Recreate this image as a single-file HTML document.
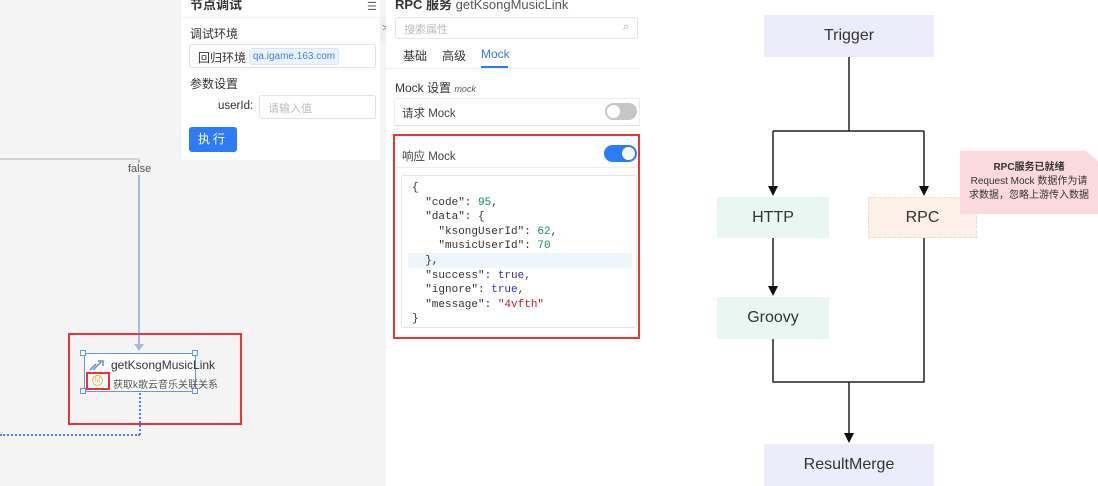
<!DOCTYPE html>
<html><head><meta charset="utf-8"><style>
*{box-sizing:border-box;margin:0;padding:0}
body{width:1098px;height:486px;position:relative;overflow:hidden;background:#fff;font-family:"Liberation Sans","Noto Sans CJK SC",sans-serif;color:#333}
.a{position:absolute}
.mono{font-family:"Liberation Mono",monospace;font-size:11px;line-height:14.6px;white-space:pre;color:#333}
.box{position:absolute;display:flex;align-items:center;justify-content:center;font-size:16px;color:#333}
</style></head><body>
<div class="a" style="left:0;top:0;width:386px;height:486px;background:#f4f4f5"></div>
<div class="a" style="left:230px;top:0;width:150px;height:6px;background:#fbe9e9;opacity:.6"></div>
<div class="a" style="left:0;top:158px;width:140px;height:2px;border-top:2px solid #d0d3d8;border-right:2px solid #d0d3d8;border-top-right-radius:4px"></div>
<div class="a" style="left:138px;top:160px;width:2px;height:190px;background:#a9bbd4"></div>
<div class="a" style="left:134px;top:344px;width:0;height:0;border-left:5px solid transparent;border-right:5px solid transparent;border-top:7px solid #a9bbd4"></div>
<div class="a" style="left:128px;top:163px;font-size:11px;color:#555;background:#f4f4f5">false</div>
<div class="a" style="left:180px;top:0;width:200px;height:160px;background:#fff;border-left:1px solid #eee"></div>
<div class="a" style="left:190px;top:-6px;font-size:13px;font-weight:bold;color:#333">节点调试</div>
<div class="a" style="left:367px;top:0;font-size:11px;color:#666">☰</div>
<div class="a" style="left:180px;top:17px;width:200px;height:1px;background:#f2f2f2"></div>
<div class="a" style="left:190px;top:25px;font-size:12px">调试环境</div>
<div class="a" style="left:189px;top:44px;width:187px;height:24px;border:1px solid #e2e2e2;border-radius:3px"></div>
<div class="a" style="left:198px;top:49px;font-size:12px">回归环境</div>
<div class="a" style="left:249px;top:48px;width:90px;height:17px;background:#edf3fe;border:1px solid #d6e4fb;border-radius:3px;font-size:10px;color:#3b7ff0;text-align:center;line-height:15px">qa.igame.163.com</div>
<div class="a" style="left:190px;top:75px;font-size:12px">参数设置</div>
<div class="a" style="left:218px;top:100px;font-size:11.5px">userId:</div>
<div class="a" style="left:259px;top:95px;width:117px;height:24px;border:1px solid #e2e2e2;border-radius:3px;font-size:11px;color:#bbb;padding:4px 8px">请输入值</div>
<div class="a" style="left:189px;top:127px;width:48px;height:25px;background:#2e7bf6;border-radius:3px;color:#fff;font-size:12px;text-align:center;line-height:25px;letter-spacing:3px">执行</div>
<div class="a" style="left:68px;top:333px;width:174px;height:92px;border:2px solid #e33"></div>
<div class="a" style="left:84px;top:353px;width:112px;height:39px;background:#fff;border:1.5px solid #6b93e6;border-radius:4px"></div>
<div class="a" style="left:80px;top:350px;width:6px;height:6px;background:#fff;border:1px solid #6b93e6"></div>
<div class="a" style="left:192px;top:350px;width:6px;height:6px;background:#fff;border:1px solid #6b93e6"></div>
<div class="a" style="left:80px;top:388px;width:6px;height:6px;background:#fff;border:1px solid #6b93e6"></div>
<div class="a" style="left:192px;top:388px;width:6px;height:6px;background:#fff;border:1px solid #6b93e6"></div>
<svg class="a" style="left:89px;top:358px" width="16" height="13"><path d="M1 12 L7 6 M4 12 L12 4 M9 3 H14 V8" stroke="#5b88e0" stroke-width="1.5" fill="none"/></svg>
<div class="a" style="left:111px;top:358px;font-size:12px;color:#333">getKsongMusicLink</div>
<div class="a" style="left:86px;top:372px;width:24px;height:18px;border:2px solid #e33"></div>
<div class="a" style="left:92px;top:375px;width:11px;height:11px;border:1px solid #e8b547;border-radius:50%;font-size:7px;color:#e8b547;text-align:center;line-height:10px">M</div>
<div class="a" style="left:113px;top:376px;font-size:10px;color:#555">获取k歌云音乐关联关系</div>
<div class="a" style="left:139px;top:393px;width:0;height:42px;border-left:2px dotted #4f7fde"></div>
<div class="a" style="left:0;top:434px;width:140px;height:0;border-top:2px dotted #4f7fde"></div>
<div class="a" style="left:380px;top:16px;width:10px;height:26px;background:#eee;border-radius:4px 0 0 4px;font-size:10px;color:#777;line-height:26px;text-align:center">&gt;</div>
<div class="a" style="left:386px;top:0;width:254px;height:486px;background:#fff"></div>
<div class="a" style="left:395px;top:-6px;font-size:13px;font-weight:bold">RPC 服务 <span style="font-weight:normal;color:#555">getKsongMusicLink</span></div>
<div class="a" style="left:395px;top:17px;width:243px;height:22px;border:1px solid #e5e5e5;border-radius:3px;font-size:11px;color:#bbb;padding:3px 8px">搜索属性<span style="float:right;color:#aaa">⌕</span></div>
<div class="a" style="left:403px;top:47px;font-size:12px">基础</div>
<div class="a" style="left:442px;top:47px;font-size:12px">高级</div>
<div class="a" style="left:481px;top:47px;font-size:12px;color:#2e7bf6">Mock</div>
<div class="a" style="left:481px;top:66px;width:27px;height:2px;background:#2e7bf6"></div>
<div class="a" style="left:386px;top:68px;width:254px;height:1px;background:#eee"></div>
<div class="a" style="left:395px;top:79px;font-size:12px">Mock 设置 <i style="font-size:9px;color:#555">mock</i></div>
<div class="a" style="left:394px;top:98px;width:246px;height:28px;border:1px solid #eee;border-bottom-color:#ddd"></div>
<div class="a" style="left:402px;top:105px;font-size:11.5px;color:#444">请求 Mock</div>
<div class="a" style="left:605px;top:103px;width:32px;height:17px;background:#c6c6c6;border-radius:9px"></div>
<div class="a" style="left:607px;top:105px;width:13px;height:13px;background:#fff;border-radius:50%"></div>
<div class="a" style="left:393px;top:134px;width:247px;height:205px;border:2px solid #e33"></div>
<div class="a" style="left:402px;top:148px;font-size:11.5px;color:#444">响应 Mock</div>
<div class="a" style="left:604px;top:145px;width:33px;height:17px;background:#2e7bf6;border-radius:9px"></div>
<div class="a" style="left:622px;top:147px;width:13px;height:13px;background:#fff;border-radius:50%"></div>
<div class="a" style="left:396px;top:167px;width:242px;height:1px;background:#eee"></div>
<div class="a" style="left:401px;top:175px;width:236px;height:153px;border:1px solid #e5e5e5;border-radius:3px"></div>
<div class="a" style="left:408px;top:253px;width:224px;height:15px;background:#eef6fc"></div>
<div class="a mono" style="left:412px;top:181px">{
  "code": <span style="color:#178a5e">95</span>,
  "data": {
    "ksongUserId": <span style="color:#178a5e">62</span>,
    "musicUserId": <span style="color:#178a5e">70</span>
  },
  "success": <span style="color:#3a2fa3">true</span>,
  "ignore": <span style="color:#3a2fa3">true</span>,
  "message": <span style="color:#c41d1d">"4vfth"</span>
}</div>
<svg class="a" style="left:640px;top:0" width="458" height="486">
<g stroke="#222" stroke-width="1.5" fill="none">
<path d="M209 57 V131 M133 131 H284 M133 131 V188 M284 131 V188 M133 238 V288 M133 339 V382 H284 V238 M209 382 V436"/>
</g>
<g fill="#111">
<path d="M128 186 H138 L133 196 Z"/><path d="M279 186 H289 L284 196 Z"/><path d="M128 286 H138 L133 296 Z"/><path d="M204 433 H214 L209 443 Z"/>
</g>
</svg>
<div class="box" style="left:764px;top:15px;width:170px;height:42px;background:#ececfb">Trigger</div>
<div class="box" style="left:717px;top:197px;width:112px;height:41px;background:#e9f6f2">HTTP</div>
<div class="box" style="left:868px;top:197px;width:109px;height:41px;background:#fdf0e8;border:1px dashed #f4dccc">RPC</div>
<div class="box" style="left:717px;top:297px;width:112px;height:42px;background:#e9f6f2">Groovy</div>
<div class="box" style="left:764px;top:444px;width:170px;height:42px;background:#ececfb">ResultMerge</div>
<div class="a" style="left:960px;top:151px;width:138px;height:63px;background:#fbd9dc;font-size:10px;line-height:14px;text-align:center;padding-top:10px;color:#333;clip-path:polygon(0 0,126px 0,138px 10px,138px 100%,0 100%)">
<b>RPC服务已就绪</b><br>Request Mock 数据作为请<br>求数据，忽略上游传入数据</div>
</body></html>
